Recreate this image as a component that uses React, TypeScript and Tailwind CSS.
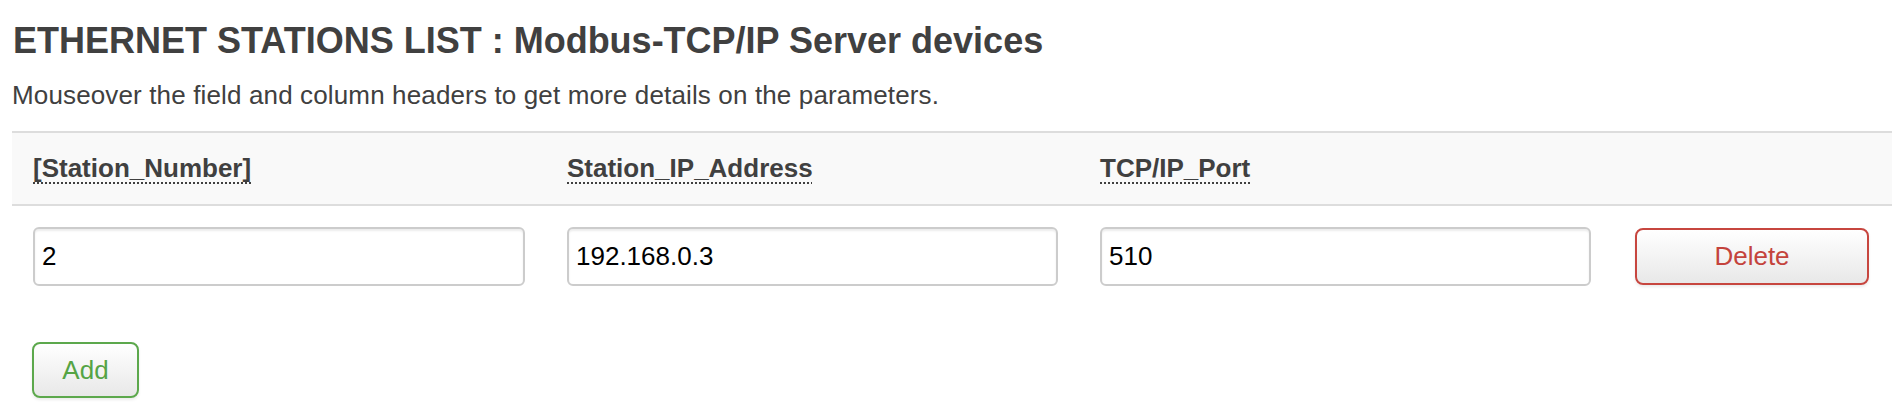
import { useState } from 'react';

const font = "font-['Liberation_Sans',Arial,sans-serif]";

const columns = [
  { key: 'number', label: '[Station_Number]' },
  { key: 'ip', label: 'Station_IP_Address' },
  { key: 'port', label: 'TCP/IP_Port' },
];

export default function App() {
  const [rows, setRows] = useState([{ number: '2', ip: '192.168.0.3', port: '510' }]);

  const update = (i: number, key: string, value: string) => {
    setRows(rows.map((r, idx) => (idx === i ? { ...r, [key]: value } : r)));
  };

  return (
    <div className={`min-h-screen bg-white px-[12px] ${font} text-[#404040]`}>
      <h2 className="pt-[19px] text-[36px] font-bold leading-[44px] pl-[1px]">
        ETHERNET STATIONS LIST : Modbus-TCP/IP Server devices
      </h2>
      <p className="mt-[14px] text-[26px] leading-[36px] tracking-[0.14px]">
        Mouseover the field and column headers to get more details on the parameters.
      </p>

      <div className="mt-[18px]">
        {/* header row */}
        <div className="grid grid-cols-[534px_533px_533px_1fr] border-y-2 border-[#dddddd] bg-[#f9f9f9]">
          {columns.map((c) => (
            <div key={c.key} className="px-[21px] pt-[17px] pb-[18px] text-[26px] font-bold leading-[36px]">
              <span
                title={c.label}
                className="underline decoration-dotted decoration-2 underline-offset-[5px] cursor-help"
              >
                {c.label}
              </span>
            </div>
          ))}
          <div />
        </div>

        {/* station rows */}
        {rows.map((r, i) => (
          <div key={i} className="grid grid-cols-[534px_533px_533px_1fr] items-center py-[21px]">
            {columns.map((c) => (
              <div key={c.key} className="px-[21px]">
                <input
                  value={r[c.key as keyof typeof r]}
                  onChange={(e) => update(i, c.key, e.target.value)}
                  className={`h-[59px] w-full rounded-[6px] border-2 border-[#cccccc] bg-white pl-[7px] text-[26px] text-black shadow-[inset_0_2px_2px_rgba(0,0,0,0.075)] outline-none ${font}`}
                />
              </div>
            ))}
            <div className="px-[23px]">
              <button
                onClick={() => setRows(rows.filter((_, idx) => idx !== i))}
                className="h-[57px] w-full rounded-[8px] border-2 border-[#c7463f] bg-gradient-to-b from-white to-[#e8e8e8] text-[26px] text-[#c4433c] shadow-[0_2px_3px_rgba(0,0,0,0.08)]"
              >
                Delete
              </button>
            </div>
          </div>
        ))}

        <div className="pl-[20px] pt-[35px]">
          <button
            onClick={() => setRows([...rows, { number: '', ip: '', port: '' }])}
            className="h-[56px] w-[107px] rounded-[8px] border-2 border-[#5ca84c] bg-gradient-to-b from-white to-[#e8e8e8] text-[26px] text-[#55a445] shadow-[0_2px_3px_rgba(0,0,0,0.08)]"
          >
            Add
          </button>
        </div>
      </div>
    </div>
  );
}
